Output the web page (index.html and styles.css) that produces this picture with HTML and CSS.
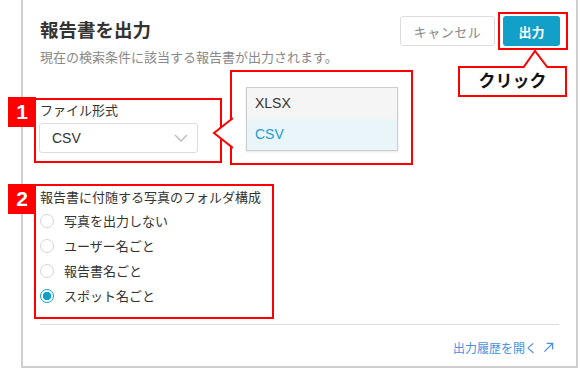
FILE: index.html
```html
<!DOCTYPE html>
<html lang="ja">
<head>
    <meta charset="UTF-8">
    <title>報告書を出力</title>
    <link rel="stylesheet" href="styles.css">
</head>
<body>
    <div class="dialog">
        <div class="dialog-header">
            <div class="heading">
                <h1>報告書を出力</h1>
                <p>現在の検索条件に該当する報告書が出力されます。</p>
            </div>
            <div class="actions">
                <button class="btn cancel">キャンセル</button>
                <button class="btn primary">出力</button>
            </div>
        </div>

        <div class="field format">
            <div class="field-label">ファイル形式</div>
            <div class="select">
                <span>CSV</span>
                <svg class="chevron" width="14" height="8" viewBox="0 0 14 8"><path d="M1 1 L7 7 L13 1" fill="none" stroke="#bbb" stroke-width="1.4"/></svg>
            </div>
        </div>

        <div class="field folders">
            <div class="field-label">報告書に付随する写真のフォルダ構成</div>
            <label class="radio"><span class="circle"></span>写真を出力しない</label>
            <label class="radio"><span class="circle"></span>ユーザー名ごと</label>
            <label class="radio"><span class="circle"></span>報告書名ごと</label>
            <label class="radio"><span class="circle checked"></span>スポット名ごと</label>
        </div>

        <div class="dialog-footer">
            <a class="history-link">出力履歴を開く
                <svg width="11" height="11" viewBox="0 0 12 12"><path d="M1.5 10.5 L10 2 M4 1.5 H10.5 V8" fill="none" stroke="#4a90e2" stroke-width="1.4"/></svg>
            </a>
        </div>
    </div>

    <!-- annotations -->
    <div class="mark mark-btn"></div>
    <div class="callout">クリック</div>
    <svg class="callout-tip" width="29" height="19" viewBox="0 0 29 19"><path d="M1 19 L13 2 L26 19" fill="#fff" stroke="#f00" stroke-width="2"/></svg>

    <div class="badge badge-1">1</div>
    <div class="mark mark-format"></div>
    <div class="mark mark-list">
        <div class="option-list">
            <div class="option">XLSX</div>
            <div class="option selected">CSV</div>
        </div>
    </div>
    <svg class="list-tip" width="21" height="32" viewBox="0 0 21 32"><path d="M21 1 L2 16 L21 31" fill="#fff" stroke="#f00" stroke-width="2"/></svg>

    <div class="badge badge-2">2</div>
    <div class="mark mark-folders"></div>
</body>
</html>
```

FILE: styles.css
```css
* {
    margin: 0;
    padding: 0;
    box-sizing: border-box;
}

body {
    font-family: "Liberation Sans", "Noto Sans CJK JP", sans-serif;
    background: #fff;
    color: #333;
    position: relative;
    width: 580px;
    height: 369px;
    overflow: hidden;
}

.dialog {
    margin-left: 21px;
    width: 557px;
    height: 368px;
    border: solid #cfcfcf;
    border-width: 0 2px 2px 2px;
    padding: 0 16px 0 17px;
    display: flex;
    flex-direction: column;
}

.dialog-header {
    display: flex;
    justify-content: space-between;
    align-items: flex-start;
    padding-top: 16px;
}

.heading h1 {
    font-size: 18.5px;
    font-weight: 700;
    line-height: 28px;
    margin-top: 1px;
    color: #333;
}

.heading p {
    font-size: 13px;
    line-height: 20px;
    margin-top: 3px;
    color: #888;
}

.actions {
    display: flex;
    gap: 8px;
}

.btn {
    font-family: inherit;
    font-size: 13px;
    height: 30px;
    border-radius: 3px;
    cursor: pointer;
}

.btn.cancel {
    width: 95px;
    background: #fff;
    border: 1px solid #ddd;
    color: #888;
    letter-spacing: 0.5px;
}

.btn.primary {
    width: 57px;
    background: #12a0c9;
    border: none;
    color: #fff;
    font-weight: 700;
}

.field-label {
    font-size: 13px;
    line-height: 18px;
    color: #333;
}

.format {
    margin-top: 34px;
}

.select {
    margin-top: 3px;
    margin-left: -1px;
    width: 159px;
    height: 30px;
    border: 1px solid #ddd;
    border-radius: 3px;
    display: flex;
    align-items: center;
    justify-content: space-between;
    padding: 0 9px 0 12px;
    font-size: 14px;
}

.folders {
    margin-top: 36px;
}

.radio {
    display: flex;
    align-items: center;
    height: 25px;
    font-size: 13px;
    color: #333;
}

.radio:first-of-type {
    margin-top: 1px;
}

.circle {
    width: 14px;
    height: 14px;
    border-radius: 50%;
    border: 1px solid #d6d6d6;
    margin-right: 10px;
    background: #fff;
}

.circle.checked {
    border-color: #12a0c9;
    background: radial-gradient(circle, #12a0c9 0 4px, #fff 4.5px);
}

.dialog-footer {
    margin-top: 16px;
    border-top: 1px solid #ddd;
    margin-right: 1px;
    display: flex;
    justify-content: flex-end;
    padding-top: 14px;
}

.history-link {
    font-size: 12px;
    color: #4a90e2;
    display: flex;
    align-items: center;
    gap: 6px;
    margin-right: 5px;
}

/* annotations */
.mark {
    position: absolute;
    border: 2px solid #f00;
}

.mark-btn {
    left: 498px;
    top: 12px;
    width: 70px;
    height: 38px;
}

.callout {
    position: absolute;
    left: 458px;
    top: 66px;
    width: 109px;
    height: 31px;
    border: 2px solid #f00;
    background: #fff;
    font-size: 17px;
    font-weight: 700;
    color: #111;
    text-align: center;
    line-height: 27px;
}

.callout-tip {
    position: absolute;
    left: 522px;
    top: 49px;
}

.badge {
    position: absolute;
    left: 8px;
    width: 28px;
    height: 30px;
    background: #f00;
    color: #fff;
    font-size: 21px;
    font-weight: 700;
    text-align: center;
    line-height: 30px;
}

.badge-1 {
    top: 97px;
}

.badge-2 {
    top: 184px;
}

.mark-format {
    left: 34px;
    top: 98px;
    width: 188px;
    height: 65px;
}

.mark-list {
    left: 230px;
    top: 70px;
    width: 183px;
    height: 95px;
    padding: 15px 13px 0 14px;
}

.list-tip {
    position: absolute;
    left: 212px;
    top: 117px;
}

.option-list {
    border: 1px solid #ccc;
    box-shadow: 0 1px 2px rgba(0, 0, 0, 0.1);
}

.option {
    height: 31px;
    line-height: 31px;
    padding-left: 8px;
    font-size: 14px;
    background: #f5f5f5;
    color: #333;
}

.option.selected {
    background: #eaf5fa;
    color: #1a9fcc;
}

.mark-folders {
    left: 34px;
    top: 184px;
    width: 240px;
    height: 135px;
}
```
